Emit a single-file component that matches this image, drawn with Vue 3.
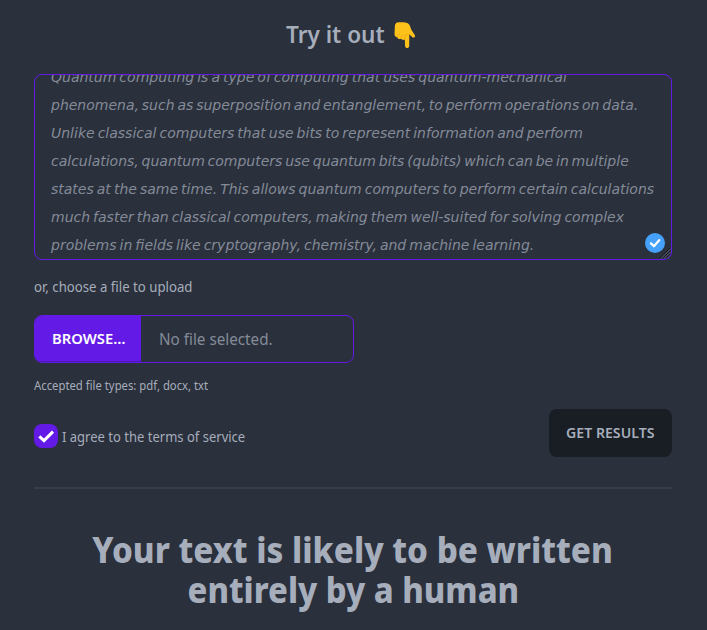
<script setup>
const lines = [
  'Quantum computing is a type of computing that uses quantum-mechanical',
  'phenomena, such as superposition and entanglement, to perform operations on data.',
  'Unlike classical computers that use bits to represent information and perform',
  'calculations, quantum computers use quantum bits (qubits) which can be in multiple',
  'states at the same time. This allows quantum computers to perform certain calculations',
  'much faster than classical computers, making them well-suited for solving complex',
  'problems in fields like cryptography, chemistry, and machine learning.',
]
</script>

<template>
  <main class="page">
    <h2 class="title">
      <span class="fit title-text">Try it out</span>
      <svg class="hand" viewBox="0 0 24 28">
        <path d="M5 1.6 C8 1 13 1 15.8 2.2 C18 3.4 18.4 6 19.2 8.5 L22.9 14.2 C23.6 16.2 21.6 17.4 20.1 15.9 L17.3 13.3 L17.2 25 C17 27.8 13.3 27.8 13.1 25 L12.8 18.6 C11.5 19.2 9.7 18.8 9 17.8 C7.4 18.4 5.8 17.7 5.4 16.4 C3.6 16.2 2.5 15 2.5 13 L2.8 6.4 C2.8 4 3.4 2.2 5 1.6Z" fill="#fcc21b" />
        <path d="M5.4 16 C5.2 14.2 6.6 12.6 8.2 13 M9 17.6 C8.7 15.6 10 13.8 11.8 14.4 M12.8 18 L12.9 15.2 C13.2 13.8 15.4 13.6 17.2 13" fill="none" stroke="#f0a80f" stroke-width=".8" />
      </svg>
    </h2>

    <div class="textbox">
      <div class="copy">
        <div v-for="line in lines" :key="line" class="line">{{ line }}</div>
      </div>
      <svg class="badge" viewBox="0 0 20 20">
        <circle cx="10" cy="10" r="10" fill="#45a1fc" />
        <path d="M6 10.4 L8.9 13.2 L14.2 7.2" fill="none" stroke="#fff" stroke-width="2.3" stroke-linecap="round" stroke-linejoin="round" />
      </svg>
      <svg class="grip" viewBox="0 0 12 12">
        <path d="M1 11 L11 1 M4 11 L11 4 M7 11 L11 7" stroke="#15181e" stroke-width="1" />
        <path d="M2 11.5 L11.5 2 M5 11.5 L11.5 5 M8 11.5 L11.5 8" stroke="#6b7079" stroke-width=".8" />
      </svg>
    </div>

    <div class="label"><span class="fit label-text">or, choose a file to upload</span></div>
    <div class="file">
      <div class="browse"><span class="fit browse-text">Browse…</span></div>
      <span class="fit file-name">No file selected.</span>
    </div>
    <div class="hint"><span class="fit hint-text">Accepted file types: pdf, docx, txt</span></div>

    <div class="actions">
      <label class="agree">
        <span class="check">
          <svg viewBox="0 0 24 24"><path d="M5.3 12.3 L10 16.6 L19 7.6" fill="none" stroke="#fff" stroke-width="3" /></svg>
        </span>
        <span class="fit agree-text">I agree to the terms of service</span>
      </label>
      <button class="submit"><span class="fit submit-text">Get results</span></button>
    </div>

    <div class="divider"></div>
    <h1 class="result">
      <span class="result-a">Your text is likely to be written</span>
      <span class="result-b">entirely by a human</span>
    </h1>
  </main>
</template>

<style>
body { background: #2a303c; overflow: hidden; }
</style>

<style scoped>
* { box-sizing: border-box; }
.page { height: 630px; padding: 18px 35px 0 34px; background: #2a303c; color: #a6adbb; font-family: "Noto Sans", sans-serif; overflow: hidden; white-space: nowrap; }
.fit { display: inline-block; transform-origin: left center; }
.title { display: flex; justify-content: center; align-items: center; gap: 8px; height: 32px; margin: 0 0 24px; font-size: 24px; line-height: 32px; font-weight: 600; }
.title-text { width: 98px; transform: scaleX(.94); }
.hand { width: 24px; height: 28px; margin: 2px 4px 0 0; }
.textbox { position: relative; height: 186px; padding: 0 16px; border: 1px solid #641ae6; border-radius: 8px; overflow: hidden; }
.copy { margin-top: -12px; font: italic 14px/28px "DejaVu Sans", sans-serif; color: #848b98; word-spacing: -1.42px; }
.line:nth-child(2) { word-spacing: -1.6px; }
.line:nth-child(4) { word-spacing: -1.65px; }
.badge { position: absolute; right: 6px; bottom: 6px; width: 20px; height: 20px; }
.grip { position: absolute; right: 0; bottom: 0; width: 12px; height: 12px; }
.label { height: 20px; margin-top: 17px; font-size: 14px; line-height: 20px; }
.label-text { transform: scaleX(.943); }
.file { display: flex; align-items: center; width: 320px; height: 48px; margin-top: 18px; border: 1px solid #641ae6; border-radius: 8px; overflow: hidden; }
.browse { display: flex; align-items: center; width: 106px; height: 46px; padding-left: 17px; background: #641ae6; border-bottom: 1px solid #4d14b3; color: #fff; font-size: 14px; font-weight: 600; text-transform: uppercase; }
.browse-text { transform: scaleX(1.055); }
.file-name { margin-left: 18px; font-size: 16px; color: #848b98; transform: scaleX(.952); }
.hint { height: 16px; margin-top: 15px; font-size: 12px; line-height: 16px; }
.hint-text { transform: scaleX(.942); }
.actions { display: flex; justify-content: space-between; height: 48px; margin-top: 15px; }
.agree { display: flex; align-items: center; gap: 3.5px; height: 24px; margin-top: 15px; font-size: 14px; }
.agree-text { transform: scaleX(.93); }
.check { width: 24px; height: 24px; border-radius: 8px; background: #641ae6; }
.check svg { display: block; width: 24px; height: 24px; }
.submit { width: 123px; height: 48px; padding: 0 1px 2px 0; border: 0; border-radius: 8px; background: #191d24; color: #a6adbb; font: 600 14px "Noto Sans", sans-serif; text-transform: uppercase; }
.submit-text { transform: scaleX(1.01); }
.divider { height: 2px; margin-top: 30px; background: #363c49; }
.result { display: flex; flex-direction: column; align-items: center; margin: 41px 0 0; font-size: 35px; line-height: 40px; font-weight: 800; }
.result-a { transform: scaleX(.948); }
.result-b { transform: scaleX(.935); }
</style>
